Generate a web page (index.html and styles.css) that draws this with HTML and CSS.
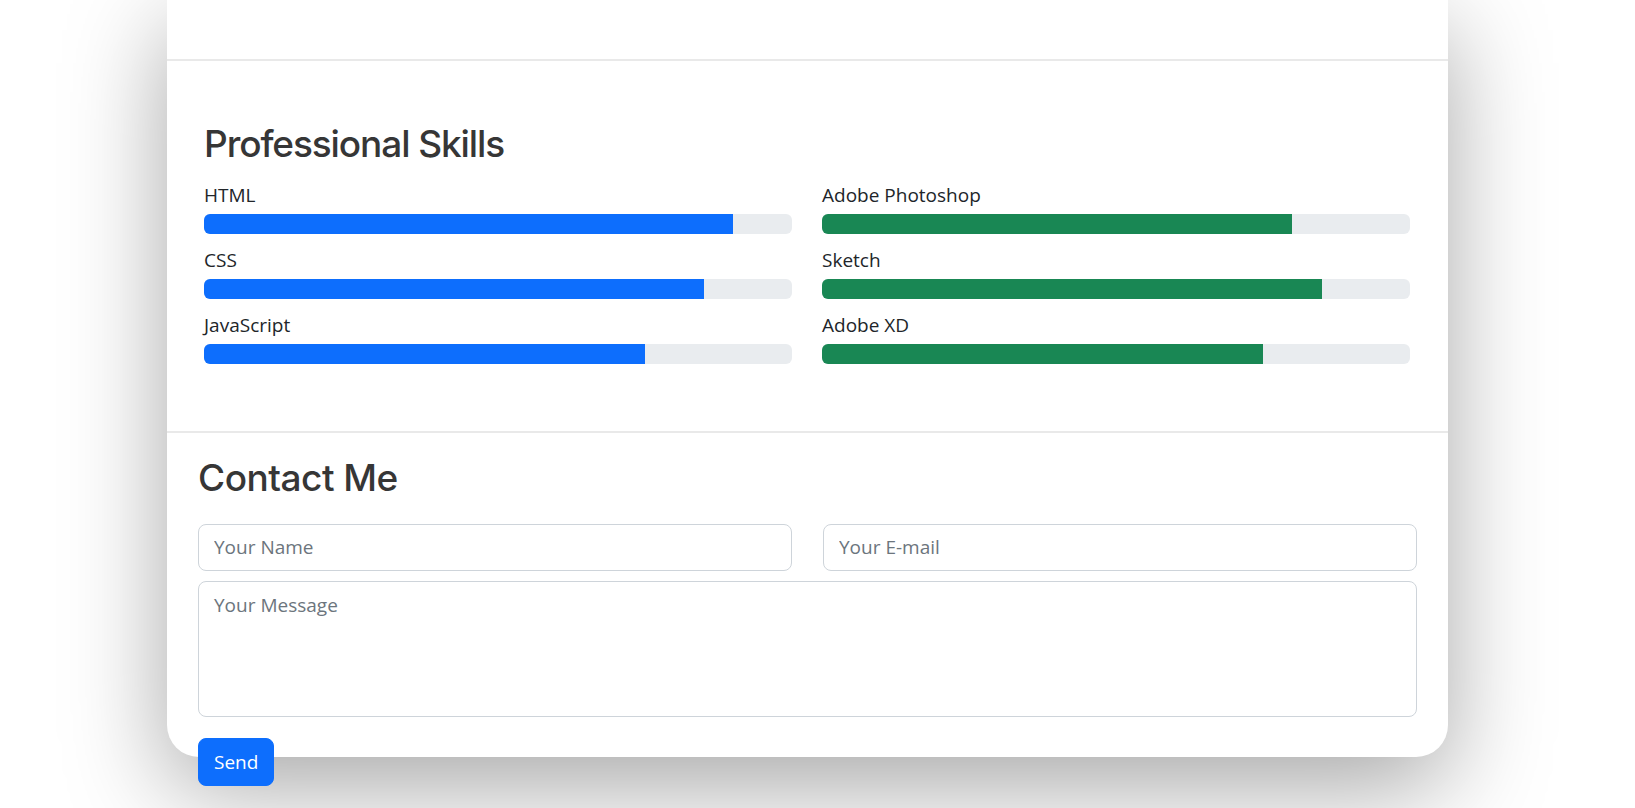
FILE: index.html
```html
<!DOCTYPE html>
<html lang="en">
<head>
<meta charset="utf-8">
<title>Portfolio</title>
<link rel="stylesheet" href="styles.css">
</head>
<body>
<div class="page">
  <div class="card">
    <div class="top-area"></div>
    <section class="skills">
      <h2 class="skills-title">Professional Skills</h2>
      <div class="skills-grid">
        <div class="skills-col">
          <div class="skill">
            <div class="skill-name">HTML</div>
            <div class="track"><div class="fill fill-blue" style="width:90%"></div></div>
          </div>
          <div class="skill">
            <div class="skill-name">CSS</div>
            <div class="track"><div class="fill fill-blue" style="width:85%"></div></div>
          </div>
          <div class="skill">
            <div class="skill-name">JavaScript</div>
            <div class="track"><div class="fill fill-blue" style="width:75%"></div></div>
          </div>
        </div>
        <div class="skills-col">
          <div class="skill">
            <div class="skill-name">Adobe Photoshop</div>
            <div class="track"><div class="fill fill-green" style="width:80%"></div></div>
          </div>
          <div class="skill">
            <div class="skill-name">Sketch</div>
            <div class="track"><div class="fill fill-green" style="width:85%"></div></div>
          </div>
          <div class="skill">
            <div class="skill-name">Adobe XD</div>
            <div class="track"><div class="fill fill-green" style="width:75%"></div></div>
          </div>
        </div>
      </div>
    </section>
    <section class="contact">
      <h2 class="contact-title">Contact Me</h2>
      <form class="contact-form">
        <div class="row-two">
          <input class="field" type="text" placeholder="Your Name">
          <input class="field" type="email" placeholder="Your E-mail">
        </div>
        <textarea class="field message" placeholder="Your Message"></textarea>
        <div class="actions">
          <button class="send" type="button">Send</button>
        </div>
      </form>
    </section>
  </div>
</div>
</body>
</html>
```

FILE: styles.css
```css
* { box-sizing: border-box; }

html {
  overflow: hidden;
  background: #ffffff;
}

body {
  margin: 0;
  padding: 0;
  min-height: 808px;
  background: #ffffff;
  font-family: "Open Sans", "Noto Sans", Arial, sans-serif;
  color: #212529;
}

.page {
  padding-left: 167px;
}

.card {
  width: 1281px;
  height: 757px;
  background: #ffffff;
  border-radius: 0 0 32px 32px;
  box-shadow: 0 30px 100px rgba(0, 0, 0, 0.35);
}

.top-area {
  height: 61px;
  border-bottom: 2px solid #e9e9e9;
}

.skills {
  padding: 61px 38px 56px 37px;
  border-bottom: 2px solid #e9e9e9;
}

.skills-title,
.contact-title {
  font-family: "Inter", "Open Sans", sans-serif;
  font-weight: 500;
  color: #363636;
  margin: 0;
  font-size: 37px;
  line-height: 1.2;
}

.skills-title {
  letter-spacing: -1.1px;
  margin-bottom: 14px;
}

.skills-grid {
  display: grid;
  grid-template-columns: 1fr 1fr;
  column-gap: 30px;
}

.skill {
  margin-bottom: 11px;
}

.skill-name {
  font-size: 19px;
  line-height: 30px;
  margin-bottom: 4px;
}

.track {
  height: 20px;
  background: #e9ecef;
  border-radius: 6px;
  overflow: hidden;
  display: flex;
}

.fill {
  height: 100%;
}

.fill-blue { background: #0d6efd; }
.fill-green { background: #198754; }

.contact {
  padding: 23px 31px 0 31px;
}

.contact-title {
  letter-spacing: -0.5px;
  margin-bottom: 23px;
}

.contact-form {
  display: flex;
  flex-direction: column;
}

.row-two {
  display: grid;
  grid-template-columns: 1fr 1fr;
  column-gap: 31px;
  margin-bottom: 10px;
}

.field {
  font-family: "Open Sans", "Noto Sans", Arial, sans-serif;
  font-size: 19px;
  color: #212529;
  border: 1px solid #ced4da;
  border-radius: 8px;
  background: #ffffff;
  height: 47px;
  padding: 0 15px;
  outline: none;
  width: 100%;
}

.field::placeholder {
  color: #6c757d;
  opacity: 1;
}

.message {
  height: 136px;
  padding: 8px 15px;
  line-height: 30px;
  resize: none;
  display: block;
}

.actions {
  margin-top: 21px;
}

.send {
  font-family: "Open Sans", "Noto Sans", Arial, sans-serif;
  font-size: 19px;
  color: #ffffff;
  background: #0d6efd;
  border: 1px solid #0d6efd;
  border-radius: 8px;
  height: 48px;
  padding: 0 15px;
  cursor: pointer;
}
```
